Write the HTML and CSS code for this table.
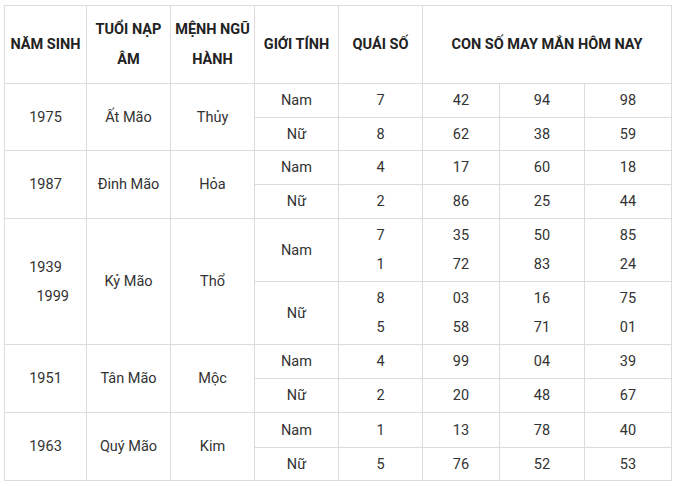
FILE: index.html
```html
<!DOCTYPE html>
<html lang="vi">
<head>
<meta charset="utf-8">
<link rel="stylesheet" href="styles.css">
</head>
<body>
<table class="lucky">
  <colgroup>
    <col class="c82"><col class="c84"><col class="c84"><col class="c84"><col class="c84"><col class="c77"><col class="c85"><col class="c87">
  </colgroup>
  <thead>
    <tr class="head">
      <th>NĂM SINH</th>
      <th>TUỔI NẠP<br>ÂM</th>
      <th>MỆNH NGŨ<br>HÀNH</th>
      <th>GIỚI TÍNH</th>
      <th>QUÁI SỐ</th>
      <th colspan="3">CON SỐ MAY MẮN HÔM NAY</th>
    </tr>
  </thead>
  <tbody>
    <tr class="r"><td rowspan="2">1975</td><td rowspan="2">Ất Mão</td><td rowspan="2">Thủy</td><td>Nam</td><td>7</td><td>42</td><td>94</td><td>98</td></tr>
    <tr class="r short"><td>Nữ</td><td>8</td><td>62</td><td>38</td><td>59</td></tr>
    <tr class="r"><td rowspan="2">1987</td><td rowspan="2">Đinh Mão</td><td rowspan="2">Hỏa</td><td>Nam</td><td>4</td><td>17</td><td>60</td><td>18</td></tr>
    <tr class="r"><td>Nữ</td><td>2</td><td>86</td><td>25</td><td>44</td></tr>
    <tr class="tall"><td rowspan="2">1939<br>&nbsp;&nbsp;&nbsp;&nbsp;1999</td><td rowspan="2">Kỷ Mão</td><td rowspan="2">Thổ</td><td>Nam</td><td>7<br>1</td><td>35<br>72</td><td>50<br>83</td><td>85<br>24</td></tr>
    <tr class="tall"><td>Nữ</td><td>8<br>5</td><td>03<br>58</td><td>16<br>71</td><td>75<br>01</td></tr>
    <tr class="r"><td rowspan="2">1951</td><td rowspan="2">Tân Mão</td><td rowspan="2">Mộc</td><td>Nam</td><td>4</td><td>99</td><td>04</td><td>39</td></tr>
    <tr class="r"><td>Nữ</td><td>2</td><td>20</td><td>48</td><td>67</td></tr>
    <tr class="r long"><td rowspan="2">1963</td><td rowspan="2">Quý Mão</td><td rowspan="2">Kim</td><td>Nam</td><td>1</td><td>13</td><td>78</td><td>40</td></tr>
    <tr class="r short"><td>Nữ</td><td>5</td><td>76</td><td>52</td><td>53</td></tr>
  </tbody>
</table>
</body>
</html>
```

FILE: styles.css
```css
html, body {
  margin: 0;
  padding: 0;
  background: #fff;
}
body {
  padding: 5px 0 0 4px;
  font-family: Roboto, "Liberation Sans", Arial, sans-serif;
}
.lucky {
  border-collapse: collapse;
  table-layout: fixed;
  width: 668px;
  font-size: 14.5px;
  color: #333;
}
.c82 { width: 82px; }
.c84 { width: 84px; }
.c77 { width: 77px; }
.c85 { width: 85px; }
.c87 { width: 87px; }
.lucky th, .lucky td {
  border: 1px solid #dcdcdc;
  text-align: center;
  vertical-align: middle;
  padding: 0 2px;
  line-height: 29px;
}
.lucky th {
  font-weight: 700;
  color: #222;
  line-height: 30px;
}
.head { height: 78px; }
.r { height: 34px; }
.r.short { height: 33px; }
.r.long { height: 35px; }
.tall { height: 63px; }
```
